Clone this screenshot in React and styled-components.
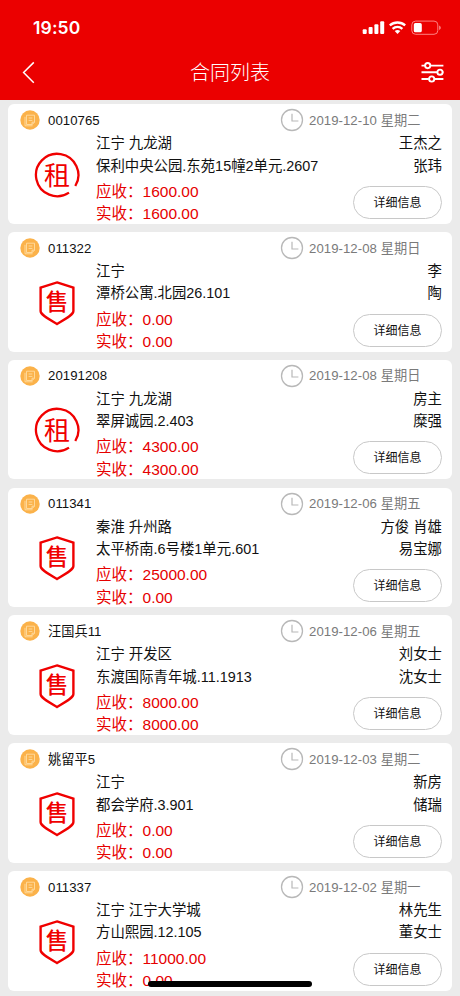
import styled, { createGlobalStyle } from 'styled-components';

const GlobalStyle = createGlobalStyle`
  * {
    box-sizing: border-box;
  }

  body {
    margin: 0;
    background: #ebebeb;
    font-family: 'Liberation Sans', 'Noto Sans CJK SC', sans-serif;
    color: #111;
  }
`;

const Screen = styled.div`
  position: relative;
  display: flex;
  flex-direction: column;
  width: 460px;
  height: 996px;
  overflow: hidden;
  background: #ebebeb;
`;

const Header = styled.header`
  flex: none;
  height: 100px;
  background: #eb0000;
  color: #fff;
`;

const StatusBar = styled.div`
  display: flex;
  align-items: center;
  justify-content: space-between;
  height: 56px;
  padding: 0 19px 0 33px;
`;

const Time = styled.span`
  padding-bottom: 1px;
  font-family: Inter, sans-serif;
  font-size: 17.5px;
  font-weight: 600;
  letter-spacing: 0.15px;
`;

const StatusIcons = styled.svg`
  display: block;
  width: 80px;
  height: 16px;
`;

const NavBar = styled.div`
  display: grid;
  grid-template-columns: 40px 1fr 40px;
  align-items: center;
  height: 34px;
  padding: 0 16px;
`;

const NavIcon = styled.svg`
  display: block;
  width: 24px;
  height: 24px;
  justify-self: ${(props) => (props.$end ? 'end' : 'start')};
  fill: none;
  stroke: #fff;
`;

const Title = styled.h1`
  margin: 0;
  font-size: 20px;
  font-weight: 300;
  line-height: 34px;
  text-align: center;
`;

const List = styled.main`
  display: flex;
  flex-direction: column;
  gap: 8.3px;
  padding: 4.3px 8px 0;
`;

const Card = styled.article`
  flex: none;
  height: 119.5px;
  overflow: hidden;
  border-radius: 6px;
  background: #fff;
`;

const CardHead = styled.div`
  display: flex;
  align-items: center;
  height: 28px;
  padding: 4px 0 0 12px;
  font-size: 13.2px;
  line-height: 20px;
`;

const DocIcon = styled.svg`
  flex: none;
  width: 20px;
  height: 20px;
`;

const ContractNo = styled.span`
  flex: none;
  width: 240px;
  padding: 1px 0 0 8px;
  letter-spacing: 0.05px;
`;

const ClockIcon = styled.svg`
  flex: none;
  width: 24px;
  height: 24px;
  fill: none;
  stroke: #b8b8b8;
`;

const DateText = styled.span`
  padding: 1px 0 0 5px;
  color: #7a7a7a;
  letter-spacing: 0.05px;
  white-space: nowrap;
`;

const CardBody = styled.div`
  display: grid;
  grid-template-columns: 88px 1fr 100px;
  padding-right: 10px;
`;

const TypeIcon = styled.svg`
  width: 48px;
  height: 48px;
  margin: 18.5px 0 0 25px;
  fill: none;
  stroke: #f00000;

  text {
    fill: #f00000;
    stroke: none;
    font-family: 'Noto Sans CJK SC', sans-serif;
    text-anchor: middle;
  }
`;

const Info = styled.div`
  font-size: 14.4px;
  line-height: 22.3px;
  white-space: nowrap;
`;

const Amounts = styled.div`
  margin-top: 4px;
  color: #e60000;
  font-size: 15.5px;
`;

const People = styled.div`
  display: flex;
  flex-direction: column;
  align-items: flex-end;
  font-size: 14.4px;
  line-height: 22.3px;
  white-space: nowrap;
`;

const DetailButton = styled.button`
  width: 89px;
  height: 33px;
  margin-top: 9px;
  padding: 0 0 2px;
  border: 1px solid #c8c8c8;
  border-radius: 17px;
  background: #fff;
  color: #111;
  font-family: inherit;
  font-size: 12px;
`;

const HomeIndicator = styled.div`
  position: absolute;
  left: 148px;
  bottom: 9px;
  width: 164px;
  height: 6px;
  border-radius: 3px;
  background: #000;
`;

const contracts = [
  { no: '0010765', date: '2019-12-10 星期二', type: 'rent', area: '江宁 九龙湖', address: '保利中央公园.东苑15幢2单元.2607', owner: '王杰之', client: '张玮', due: '1600.00', paid: '1600.00' },
  { no: '011322', date: '2019-12-08 星期日', type: 'sale', area: '江宁', address: '潭桥公寓.北园26.101', owner: '李', client: '陶', due: '0.00', paid: '0.00' },
  { no: '20191208', date: '2019-12-08 星期日', type: 'rent', area: '江宁 九龙湖', address: '翠屏诚园.2.403', owner: '房主', client: '糜强', due: '4300.00', paid: '4300.00' },
  { no: '011341', date: '2019-12-06 星期五', type: 'sale', area: '秦淮 升州路', address: '太平桥南.6号楼1单元.601', owner: '方俊 肖雄', client: '易宝娜', due: '25000.00', paid: '0.00' },
  { no: '汪国兵11', date: '2019-12-06 星期五', type: 'sale', area: '江宁 开发区', address: '东渡国际青年城.11.1913', owner: '刘女士', client: '沈女士', due: '8000.00', paid: '8000.00' },
  { no: '姚留平5', date: '2019-12-03 星期二', type: 'sale', area: '江宁', address: '都会学府.3.901', owner: '新房', client: '储瑞', due: '0.00', paid: '0.00' },
  { no: '011337', date: '2019-12-02 星期一', type: 'sale', area: '江宁 江宁大学城', address: '方山熙园.12.105', owner: '林先生', client: '董女士', due: '11000.00', paid: '0.00' },
];

function ContractType({ type }) {
  if (type === 'rent') {
    return (
      <TypeIcon viewBox='0 0 48 48'>
        <path d='M42.3 35A21.2 21.2 0 1 0 36 41.6' strokeWidth='2.3' />
        <text x='24' y='33.7' fontSize='26'>租</text>
      </TypeIcon>
    );
  }
  return (
    <TypeIcon viewBox='0 0 48 48'>
      <path d='M24 3.4L40.4 8.6V32C40.4 35.2 36 38.2 24 45C12 38.2 7.6 35.2 7.6 32V8.6Z' strokeWidth='2.4' />
      <text x='24' y='31.3' fontSize='22.5' fontWeight='500'>售</text>
    </TypeIcon>
  );
}

function ContractCard({ contract }) {
  return (
    <Card>
      <CardHead>
        <DocIcon viewBox='0 0 20 20' fill='none'>
          <circle cx='10' cy='10' r='9.7' fill='#fbb24a' />
          <path d='M6.5 5.2h8v7.2L12 14.5H6.5zM14.5 12.2H12v2.3M8.6 8h3.8M8.6 10.4h3.8M5 6.8v9h7.6' stroke='#ffdda2' strokeWidth='0.9' />
        </DocIcon>
        <ContractNo>{contract.no}</ContractNo>
        <ClockIcon viewBox='0 0 24 24'>
          <circle cx='12' cy='12' r='10.5' strokeWidth='1.3' />
          <path d='M12 5.8v7.2h6.4' strokeWidth='1.2' />
        </ClockIcon>
        <DateText>{contract.date}</DateText>
      </CardHead>
      <CardBody>
        <ContractType type={contract.type} />
        <Info>
          <div>{contract.area}</div>
          <div>{contract.address}</div>
          <Amounts>
            <div>应收：{contract.due}</div>
            <div>实收：{contract.paid}</div>
          </Amounts>
        </Info>
        <People>
          <div>{contract.owner}</div>
          <div>{contract.client}</div>
          <DetailButton>详细信息</DetailButton>
        </People>
      </CardBody>
    </Card>
  );
}

function App() {
  return (
    <Screen>
      <GlobalStyle />
      <Header>
        <StatusBar>
          <Time>19:50</Time>
          <StatusIcons viewBox='0 0 80 16' fill='none'>
            {/* 信号 */}
            <g fill='#fff'>
              <rect x='1.7' y='9.3' width='4' height='4.7' rx='1' />
              <rect x='7.6' y='7' width='4' height='7' rx='1' />
              <rect x='13.4' y='4.3' width='4' height='9.7' rx='1' />
              <rect x='19.2' y='1.3' width='4' height='12.7' rx='1' />
            </g>
            {/* Wi-Fi */}
            <g stroke='#fff' strokeWidth='2.3'>
              <path d='M28.8 5.4A11.6 11.6 0 0 1 44.2 5.4' />
              <path d='M31.6 8.8A7.4 7.4 0 0 1 41.4 8.8' />
            </g>
            <path d='M36.5 14l-2.8-2.9a4.3 4.3 0 0 1 5.6 0z' fill='#fff' />
            {/* 电量 */}
            <rect x='50.8' y='1.1' width='26' height='13.2' rx='3.8' stroke='#ff8f8f' strokeWidth='0.9' />
            <rect x='52.8' y='3.1' width='8' height='9.2' rx='1.6' fill='#fff' />
            <path d='M78.2 5.5c2 .8 2 3.6 0 4.4z' fill='#ff8f8f' />
          </StatusIcons>
        </StatusBar>
        <NavBar>
          <NavIcon viewBox='0 0 24 24'>
            <path d='M17.8 1.4L7.6 11.5l10.2 10.3' strokeWidth='1.5' />
          </NavIcon>
          <Title>合同列表</Title>
          <NavIcon $end viewBox='0 0 24 24' strokeWidth='1.9'>
            <path d='M1.5 4.6h3.6M10.4 4.6h13M1.5 11.2h15.7M22.6 11.2h.8M1.5 18h7.3M14.4 18h9' />
            <circle cx='7.7' cy='4.6' r='2.6' />
            <circle cx='20' cy='11.2' r='2.6' />
            <circle cx='11.7' cy='18' r='2.6' />
          </NavIcon>
        </NavBar>
      </Header>
      <List>
        {contracts.map((contract) => (
          <ContractCard key={contract.no} contract={contract} />
        ))}
      </List>
      <HomeIndicator />
    </Screen>
  );
}

export default App;
